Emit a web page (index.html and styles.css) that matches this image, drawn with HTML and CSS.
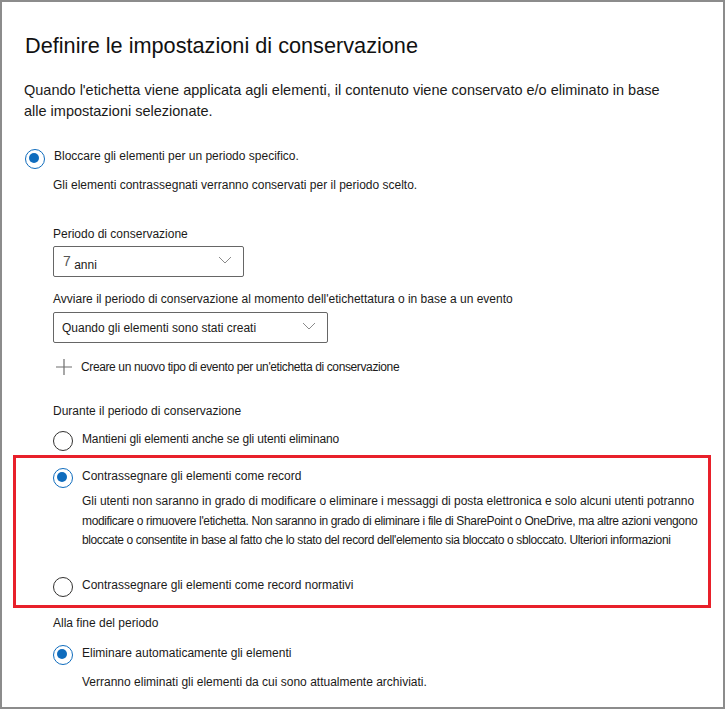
FILE: index.html
```html
<!DOCTYPE html>
<html lang="it">
<head>
<meta charset="utf-8">
<link rel="stylesheet" href="styles.css">
</head>
<body>
<div class="frame">
  <h1 class="title">Definire le impostazioni di conservazione</h1>
  <p class="intro">Quando l'etichetta viene applicata agli elementi, il contenuto viene conservato e/o eliminato in base<br>alle impostazioni selezionate.</p>

  <div class="radio-row top-row">
    <span class="radio checked"></span>
    <span class="label">Bloccare gli elementi per un periodo specifico.</span>
  </div>

  <div class="sub">
    <div class="hint first-hint">Gli elementi contrassegnati verranno conservati per il periodo scelto.</div>

    <div class="field-label fl1">Periodo di conservazione</div>
    <div class="dropdown dd1">
      <span class="dd-text"><span class="num">7</span> anni</span>
      <svg class="chev" width="14" height="8" viewBox="0 0 14 8"><polyline points="1,1 7,7 13,1" fill="none" stroke="#8a8a8a" stroke-width="1"/></svg>
    </div>

    <div class="field-label fl2">Avviare il periodo di conservazione al momento dell'etichettatura o in base a un evento</div>
    <div class="dropdown dd2">
      <span class="dd-text">Quando gli elementi sono stati creati</span>
      <svg class="chev" width="14" height="8" viewBox="0 0 14 8"><polyline points="1,1 7,7 13,1" fill="none" stroke="#8a8a8a" stroke-width="1"/></svg>
    </div>

    <div class="add-row">
      <svg class="plus" width="16" height="16" viewBox="0 0 16 16"><path d="M8 0v16M0 8h16" stroke="#6e6e6e" stroke-width="1.2" fill="none"/></svg>
      <span class="label">Creare un nuovo tipo di evento per un'etichetta di conservazione</span>
    </div>

    <div class="field-label fl3">Durante il periodo di conservazione</div>
    <div class="radio-row r2">
      <span class="radio"></span>
      <span class="label tight">Mantieni gli elementi anche se gli utenti eliminano</span>
    </div>
  </div>

  <div class="highlight">
    <div class="radio-row">
      <span class="radio checked"></span>
      <span class="label">Contrassegnare gli elementi come record</span>
    </div>
    <div class="desc">
      <span class="line l1">Gli utenti non saranno in grado di modificare o eliminare i messaggi di posta elettronica e solo alcuni utenti potranno</span>
      <span class="line l2">modificare o rimuovere l'etichetta. Non saranno in grado di eliminare i file di SharePoint o OneDrive, ma altre azioni vengono</span>
      <span class="line l3">bloccate o consentite in base al fatto che lo stato del record dell'elemento sia bloccato o sbloccato. Ulteriori informazioni</span>
    </div>
    <div class="radio-row r3">
      <span class="radio"></span>
      <span class="label">Contrassegnare gli elementi come record normativi</span>
    </div>
  </div>

  <div class="sub">
    <div class="field-label fl4">Alla fine del periodo</div>
    <div class="radio-row r4">
      <span class="radio checked"></span>
      <span class="label">Eliminare automaticamente gli elementi</span>
    </div>
    <div class="hint last-hint">Verranno eliminati gli elementi da cui sono attualmente archiviati.</div>
  </div>
</div>
</body>
</html>
```

FILE: styles.css
```css
* { box-sizing: border-box; }
html, body { margin: 0; padding: 0; background: #fff; }
body {
  font-family: "Liberation Sans", Arial, sans-serif;
  color: #1b1a19;
}
.frame {
  width: 725px;
  height: 709px;
  border: 2px solid #8c8c8c;
  padding: 0 0 0 22px;
  overflow: hidden;
}
.title {
  margin: 30px 0 0 1px;
  font-size: 21.7px;
  line-height: 28px;
  font-weight: 400;
  color: #111;
}
.intro {
  margin: 20px 0 0 0;
  font-size: 14.5px;
  line-height: 21px;
  color: #1b1a19;
}
.radio-row {
  display: flex;
  align-items: flex-start;
  gap: 10px;
}
.radio-row .label {
  font-size: 12px;
  line-height: 16px;
}
.radio {
  flex: none;
  width: 20px;
  height: 20px;
  position: relative;
}
.radio::before {
  content: "";
  position: absolute;
  left: 1px; top: 1px;
  width: 18px; height: 18px;
  border: 1px solid #323130;
  border-radius: 50%;
}
.radio.checked::before {
  border: 1.5px solid #0f6cbd;
}
.radio.checked::after {
  content: "";
  position: absolute;
  left: 5px; top: 5px;
  width: 10px; height: 10px;
  border-radius: 50%;
  background: #0f6cbd;
}
.top-row { margin-top: 26px; }
.sub { padding-left: 29px; }
.hint, .field-label, .desc {
  font-size: 12px;
  line-height: 16px;
}
.first-hint { margin-top: 9px; }
.fl1 { margin-top: 33px; }
.dropdown {
  display: flex;
  align-items: center;
  justify-content: space-between;
  height: 31px;
  border: 1px solid #666;
  border-radius: 2px;
  padding: 0 8px 0 9px;
  margin-top: 4px;
  font-size: 12px;
}
.dd1 { width: 191px; }
.dd2 { width: 275px; margin-top: 5px; padding-left: 8px; }
.dd1 .dd-text { padding-top: 4px; }
.num { font-size: 14px; color: #555; position: relative; top: -3px; }
.chev { margin-right: 3px; margin-top: -3px; }
.fl2 { margin-top: 14px; }
.add-row {
  display: flex;
  align-items: center;
  margin-top: 16px;
  margin-left: 3px;
  gap: 9px;
}
.add-row .label {
  font-size: 12px;
  line-height: 16px;
  letter-spacing: -0.38px;
}
.fl3 { margin-top: 28px; }
.r2 { margin-top: 11px; margin-left: -1px; }
.tight { letter-spacing: -0.14px; }
.r2 .label, .highlight .radio-row .label, .r4 .label { margin-top: 1px; }
.highlight {
  width: 698px;
  margin: 5px 0 0 -11px;
  border: 3px solid #e8202a;
  padding: 9px 0 9px 36px;
}
.desc {
  margin: 5px 0 0 30px;
  line-height: 19.5px;
  white-space: nowrap;
}
.line { display: block; }
.l1 { letter-spacing: -0.03px; }
.l2 { letter-spacing: -0.36px; }
.l3 { letter-spacing: -0.38px; }
.r3 { margin-top: 25px; }
.fl4 { margin-top: 7px; }
.r4 { margin-top: 13px; margin-left: -1px; }
.last-hint { margin-top: 10px; margin-left: 29px; }
```
